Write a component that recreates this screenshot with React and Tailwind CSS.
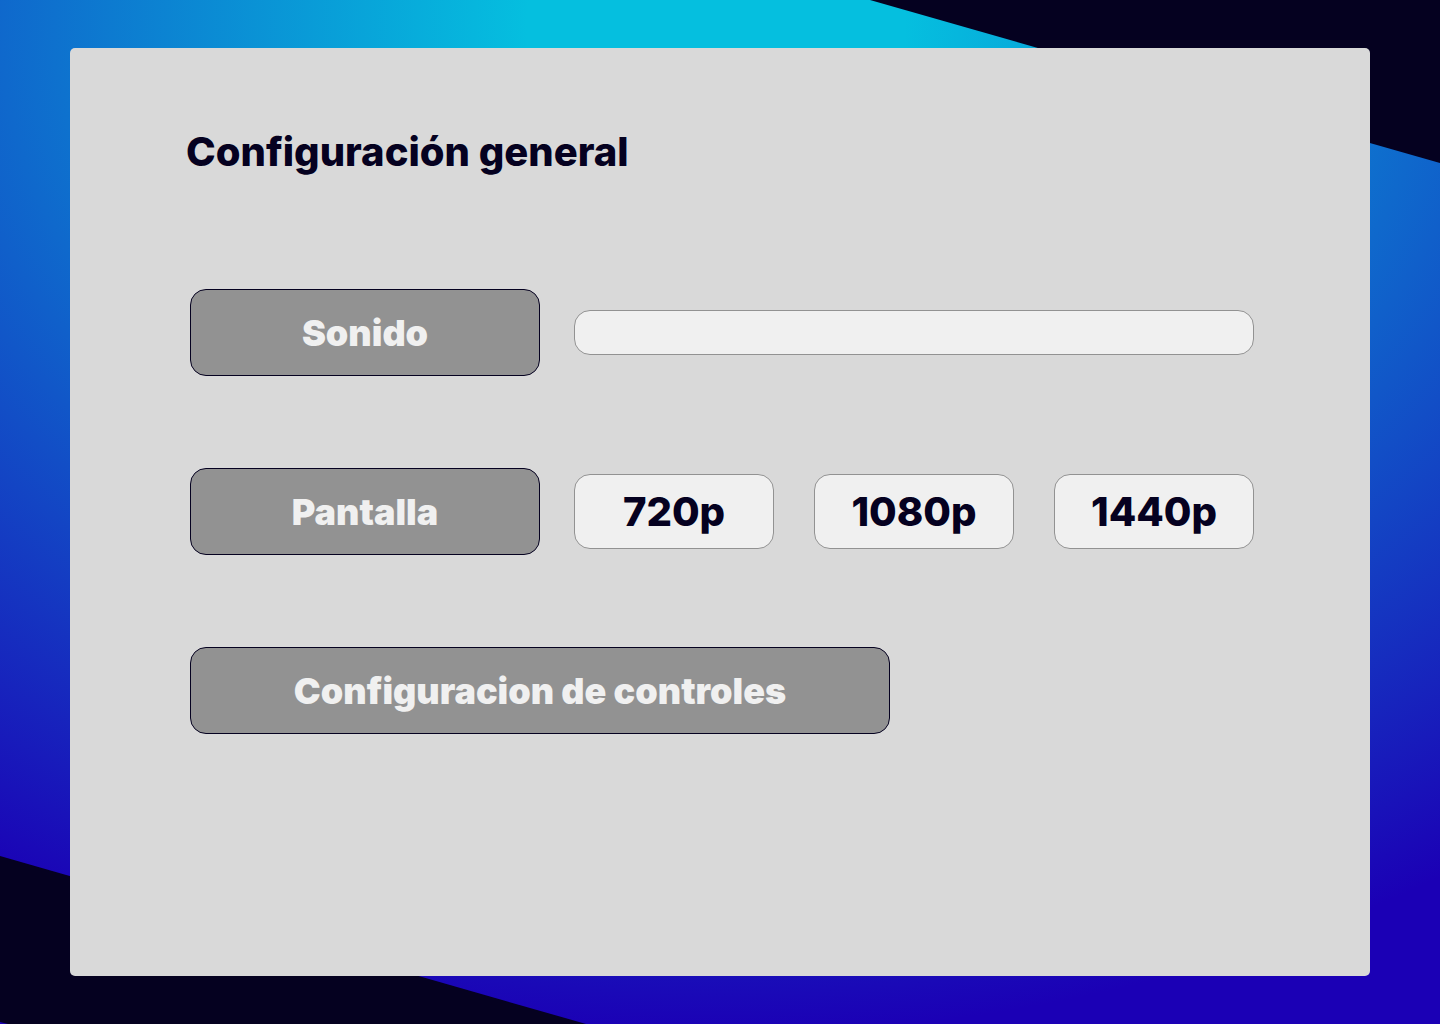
import { useState } from "react";

const RESOLUTIONS = ["720p", "1080p", "1440p"];

function Backdrop() {
  return (
    <svg
      className="absolute inset-0 h-full w-full"
      viewBox="0 0 1440 1024"
      preserveAspectRatio="none"
      aria-hidden="true"
    >
      <defs>
        <radialGradient
          id="glow"
          gradientUnits="userSpaceOnUse"
          cx="0"
          cy="0"
          r="1"
          gradientTransform="translate(716 25) scale(1350 1010)"
        >
          <stop offset="0.14" stopColor="#05bfdf" />
          <stop offset="1" stopColor="#1b00b5" />
        </radialGradient>
      </defs>
      <rect width="1440" height="1024" fill="url(#glow)" />
      <polygon points="870,0 1440,0 1440,163" fill="#050120" />
      <polygon points="0,856 586,1024 8,1024 0,1022" fill="#050120" />
    </svg>
  );
}

function MenuButton({ children, className }) {
  return (
    <button
      type="button"
      className={`h-[87px] shrink-0 rounded-2xl border border-[#050120] bg-[#929292] text-4xl font-black text-[#f0f0f0] ${className}`}
    >
      {children}
    </button>
  );
}

export default function App() {
  const [volume, setVolume] = useState(50);
  const [resolution, setResolution] = useState(null);

  return (
    <div className="relative flex min-h-screen flex-col bg-[#1b00b5] px-[70px] py-12 font-['Inter',sans-serif] text-[#050120]">
      <Backdrop />
      <main className="relative flex-1 rounded-[5px] bg-[#d9d9d9] px-[116px] py-20">
        <h1 className="text-[40px] leading-12 font-extrabold">Configuración general</h1>

        <div className="mt-[113px] flex flex-col gap-[92px] pl-1">
          <div className="flex items-center gap-[34px]">
            <MenuButton className="w-[350px]">Sonido</MenuButton>
            <input
              type="range"
              aria-label="Sonido"
              value={volume}
              onChange={(e) => setVolume(Number(e.target.value))}
              className="h-[45px] min-w-0 flex-1 appearance-none rounded-2xl border border-[#929292] bg-[#f0f0f0] [&::-webkit-slider-thumb]:appearance-none"
            />
          </div>

          <div className="flex items-center gap-[34px]">
            <MenuButton className="w-[350px]">Pantalla</MenuButton>
            <div className="grid min-w-0 flex-1 grid-cols-3 gap-10">
              {RESOLUTIONS.map((name) => (
                <button
                  key={name}
                  type="button"
                  aria-pressed={resolution === name}
                  onClick={() => setResolution(name)}
                  className="h-[75px] rounded-2xl border border-[#929292] bg-[#f0f0f0] text-[40px] font-extrabold"
                >
                  {name}
                </button>
              ))}
            </div>
          </div>

          <MenuButton className="w-full max-w-[700px]">Configuracion de controles</MenuButton>
        </div>
      </main>
    </div>
  );
}
